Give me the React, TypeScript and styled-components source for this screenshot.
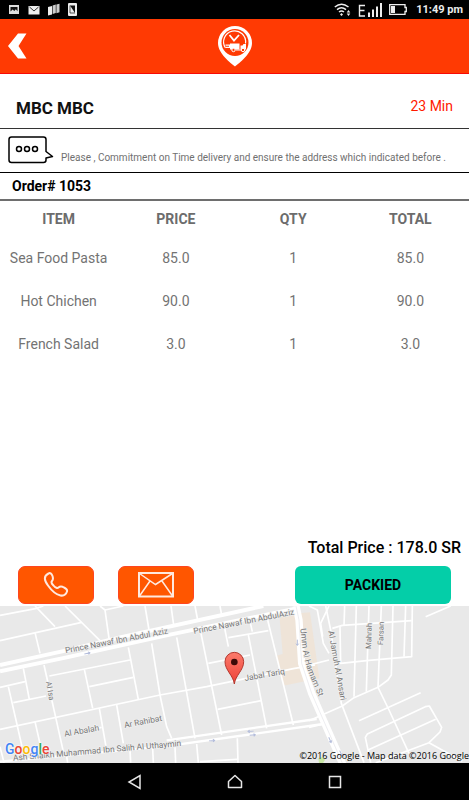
import React from "react";
import styled, { createGlobalStyle } from "styled-components";

const GlobalStyle = createGlobalStyle`
  * { box-sizing: border-box; }
  body {
    margin: 0;
    background: #fff;
    font-family: Roboto, "Open Sans", sans-serif;
  }
`;

const Screen = styled.div`
  display: flex;
  flex-direction: column;
  min-height: 100vh;
  background: #fff;
`;

const StatusBar = styled.div`
  display: flex;
  align-items: center;
  justify-content: space-between;
  height: 19px;
  padding: 0 6px 0 8px;
  background: #000;
  color: #ececec;
`;

const StatusGroup = styled.div<{ $gap: number }>`
  display: flex;
  align-items: center;
  gap: ${(p) => p.$gap}px;
`;

const Clock = styled.time`
  margin-left: 2px;
  font-size: 11px;
  line-height: 16px;
  font-weight: 700;
`;

const AppBar = styled.header`
  display: grid;
  grid-template-columns: 1fr auto 1fr;
  align-items: center;
  height: 55px;
  padding: 0 8px;
  background: #ff3a03;
  border-bottom: 1px solid #f80a06;
`;

const BackButton = styled.button`
  display: flex;
  justify-self: start;
  padding: 0;
  border: 0;
  background: none;
  cursor: pointer;
`;

const Main = styled.main`
  display: flex;
  flex: 1;
  flex-direction: column;
`;

const CustomerRow = styled.section`
  display: flex;
  align-items: center;
  justify-content: space-between;
  height: 55px;
  padding: 14px 16px 0;
  border-bottom: 1px solid #333;
`;

const CustomerName = styled.h1`
  margin: 0;
  font-size: 17px;
  line-height: 24px;
  font-weight: 700;
  color: #111;
`;

const Eta = styled.span`
  padding-bottom: 4px;
  font-size: 14px;
  line-height: 20px;
  color: #ff1a00;
`;

const NoteRow = styled.section`
  display: flex;
  align-items: flex-start;
  gap: 7px;
  height: 44px;
  padding: 7px 8px 0;
  border-bottom: 1px solid #000;

  svg {
    flex: none;
  }
`;

const NoteText = styled.p`
  margin: 14px 0 0;
  font-size: 10px;
  line-height: 16px;
  color: #707070;
`;

const OrderTitle = styled.h2`
  height: 28px;
  margin: 0;
  padding: 0 12px;
  border-bottom: 2px solid #6e6e6e;
  font-size: 14px;
  line-height: 27px;
  font-weight: 700;
  color: #000;
`;

const ItemTable = styled.table`
  width: 100%;
  table-layout: fixed;
  border-collapse: collapse;
  color: #737373;
  font-size: 14px;
  text-align: center;

  th {
    height: 36px;
    padding: 0;
    font-weight: 700;
    color: #6c6c6c;
  }
  td {
    height: 43px;
    padding: 0 0 1px;
  }
`;

const Total = styled.p`
  margin: auto 8px 8px;
  font-size: 16px;
  line-height: 20px;
  font-weight: 500;
  color: #000;
  text-align: right;
`;

const Actions = styled.div`
  display: flex;
  gap: 24px;
  padding: 0 18px 2px;
`;

const ContactButton = styled.button`
  display: flex;
  align-items: center;
  justify-content: center;
  width: 76px;
  height: 38px;
  padding: 0;
  border: 1px solid #ff4520;
  border-radius: 7px;
  background: #ff5600;
  cursor: pointer;
`;

const PackedButton = styled.button`
  width: 156px;
  height: 38px;
  margin-left: auto;
  padding: 0;
  border: 0;
  border-radius: 6px;
  background: #04cea8;
  color: #000;
  font-family: inherit;
  font-size: 14px;
  font-weight: 700;
  cursor: pointer;
`;

const MapPanel = styled.section`
  position: relative;
  height: 157px;
  overflow: hidden;
  background: #e9e9e9;
`;

const MapDrawing = styled.svg`
  display: block;
  width: 100%;
  height: 100%;
`;

const MapBrand = styled.span`
  position: absolute;
  left: 5px;
  bottom: 4px;
  font-size: 14px;
  line-height: 20px;
  font-weight: 500;
  text-shadow: 0 0 2px #fff, 0 0 2px #fff;
`;

const BrandLetter = styled.span<{ $color: string }>`
  color: ${(p) => p.$color};
`;

const Attribution = styled.span`
  position: absolute;
  right: 0;
  bottom: 0;
  font-family: "Open Sans", sans-serif;
  font-size: 9px;
  line-height: 14px;
  color: #000;
  white-space: nowrap;
`;

const NavBar = styled.nav`
  display: flex;
  align-items: center;
  justify-content: center;
  gap: 80px;
  height: 37px;
  background: #000;
`;

const NavButton = styled.button`
  display: flex;
  width: 20px;
  height: 20px;
  padding: 0;
  border: 0;
  background: none;
  cursor: pointer;
`;

const items = [
  { name: "Sea Food Pasta", price: "85.0", qty: 1, total: "85.0" },
  { name: "Hot Chichen", price: "90.0", qty: 1, total: "90.0" },
  { name: "French Salad", price: "3.0", qty: 1, total: "3.0" },
];

const brand: [string, string][] = [
  ["G", "#4285f4"],
  ["o", "#ea4335"],
  ["o", "#fbbc05"],
  ["g", "#4285f4"],
  ["l", "#34a853"],
  ["e", "#ea4335"],
];

const streets = [
  // west
  "M0 46L110 25L130 18", "M105 18L165 80", "M0 122L245 67", "M195 18L300 122",
  "M300 18L315 30L327 115", "M315 30L370 18", "M435 18L447 90", "M105 98L120 160",
  "M70 205L88 298", "M0 262L75 245", "M25 260L52 378L66 440", "M40 308L138 288",
  "M132 195L190 455", "M148 228L390 180", "M253 208L278 325", "M268 260L400 232",
  "M385 142L415 298", "M455 130L480 285L500 380L515 415", "M105 365L122 440",
  "M298 325L318 440", "M350 315L370 430", "M290 385L305 382", "M0 440L12 488",
  "M200 470L203 488", "M390 450L392 488", "M458 445L460 488",
  // centre
  "M0 388L480 285L620 260L880 206L945 195", "M513 18L521 75", "M585 18L593 60",
  "M660 18L665 45", "M530 112L585 415", "M603 100L665 405", "M673 80L685 140",
  "M625 190L750 165", "M685 113L805 92", "M750 65L757 95", "M745 105L800 385",
  "M803 60L880 375", "M653 328L783 302", "M525 440L527 488", "M590 432L595 488",
  "M712 415L714 488", "M600 485L712 478",
  // east
  "M927 18L952 30L970 130L987 160", "M987 18L962 70L968 110",
  "M977 18L992 90L1024 310L1092 488", "M1034 18L1032 78", "M1069 18L1062 290",
  "M1107 18L1099 275", "M1144 18L1134 262",
  "M1179 18L1174 225L1164 240L1134 262L1062 293L1027 318L927 362",
  "M1217 18L1212 170", "M1237 18L1235 170L1107 181L1022 190L1020 80",
  "M997 85L1027 76L1235 62", "M900 202L987 180", "M1277 50L1352 18",
  "M1134 262L1167 330L1227 460", "M1077 362L1262 278",
  "M1112 488L1096 412L1102 402L1276 320L1288 318L1325 382L1320 396L1287 428L1127 488",
  "M1104 450L1307 358", "M1287 428L1387 484", "M927 382L970 372",
];

const avenues = [
  "M0 195L200 151L360 112L790 18",
  "M0 214L200 172L360 137L510 104L890 25",
];

const shaikhRoad = [
  "M0 485L360 452L510 437L760 402L970 372",
  "M500 421L950 357",
];

const arrows: [number, number, number][] = [
  [262, 160, -11], [636, 422, -4], [752, 394, 176], [758, 405, -4],
  [892, 128, 90], [990, 420, 65], [1023, 460, 65],
];

function CityMap() {
  return (
    <MapDrawing viewBox="0 18 1407 471" preserveAspectRatio="xMidYMid slice" role="img" aria-label="Delivery location map">
      <rect x="-2000" y="-2000" width="6000" height="5000" fill="#e9e9e9" />
      <path d="M838 45L930 37L958 235L850 257L828 167L848 162Z" fill="#efe4d8" />
      <path d="M955 475l14-5l6 10l-6 9h-12z" fill="#c9e6a6" />
      <g fill="none" stroke="#fff" strokeLinejoin="round">
        {streets.map((d) => <path key={d} d={d} strokeWidth="5" />)}
        {shaikhRoad.map((d) => <path key={d} d={d} strokeWidth="7" />)}
        {avenues.map((d) => <path key={d} d={d} strokeWidth="12" />)}
        <path d="M888 18L897 60L905 190L935 280L970 360L1030 496" strokeWidth="22" />
        <path d="M888 18L897 60L905 190L935 280L970 360L1030 496" strokeWidth="2" stroke="#e4e4e8" />
      </g>
      <g stroke="#b4bddb" strokeWidth="3" fill="none">
        {arrows.map(([x, y, r]) => (
          <path key={`${x}-${y}`} d="M-9 0H8M3 -4L8 0L3 4" transform={`translate(${x} ${y}) rotate(${r})`} />
        ))}
      </g>
      <defs>
        <path id="umm" d="M901 86L908 145Q914 195 935 240L975 335" />
      </defs>
      <g fill="#777" stroke="#f1f1f1" strokeWidth="4" paintOrder="stroke" fontFamily="Roboto, sans-serif" fontSize="25">
        <text transform="translate(197 160) rotate(-11)">Prince Nawaf Ibn Abdul Aziz</text>
        <text transform="translate(582 102) rotate(-11)">Prince Nawaf Ibn AbdulAziz</text>
        <text transform="translate(40 482) rotate(-5)">Ash Shaikh Muhammad Ibn Salih Al Uthaymin</text>
        <text transform="translate(735 243) rotate(-10)">Jabal Tariq</text>
        <text transform="translate(194 410) rotate(-10)">Al Abalah</text>
        <text transform="translate(374 384) rotate(-11)">Ar Rahibat</text>
        <text fontSize="23" transform="translate(138 246) rotate(80)">Al Isa</text>
        <text><textPath href="#umm">Umm Al Hamam St</textPath></text>
        <text transform="translate(985 94) rotate(80)">Al Jamuh Al Ansari</text>
        <text fontSize="23" transform="translate(1113 147) rotate(-88)">Mahrah</text>
        <text fontSize="23" transform="translate(1149 135) rotate(-88)">Farsan</text>
      </g>
      <defs>
        <linearGradient id="pin" x1="0" y1="0" x2="0" y2="1">
          <stop offset="0" stopColor="#fb7b6c" />
          <stop offset="1" stopColor="#ee4036" />
        </linearGradient>
      </defs>
      <path d="M703 252C700 226 675 211 675 185A28 28 0 0 1 731 185C731 211 706 226 703 252Z" fill="url(#pin)" stroke="#b3372e" strokeWidth="3" />
      <circle cx="703" cy="186" r="10" fill="#3c0a08" />
    </MapDrawing>
  );
}

function NotificationIcons() {
  return (
    <StatusGroup $gap={8}>
      <svg width="12" height="12" viewBox="0 0 12 12" aria-hidden="true">
        <path d="M1 1h10v9H1z" fill="#ddd" />
        <path d="M2.5 3h7v4.300L7.800 5.300 6.300 7 4.600 5.500 2.500 7.500z" fill="#111" />
      </svg>
      <svg width="12" height="12" viewBox="0 0 12 12" aria-hidden="true">
        <path d="M.5 2h11v8.500H.5z" fill="#eee" />
        <path d="M1.500 3L6 7l4.500-4" fill="none" stroke="#333" strokeWidth="1" />
      </svg>
      <svg width="12" height="13" viewBox="0 0 12 13" aria-hidden="true">
        <path d="M0 4l4-1v8.500l-4 1z" fill="#eee" />
        <path d="M4.600 2.500l3.200-.900v8.500l-3.200 1zM8.400 1.500L11.500.800v8.400l-3.100 1z" fill="#ccc" />
      </svg>
      <svg width="10" height="13" viewBox="0 0 10 13" aria-hidden="true">
        <rect x="0" y="0" width="9" height="13" rx="1" fill="#eee" />
        <path d="M2 2.500h5v7.500z" fill="#111" />
        <path d="M2 2.500v7.500h5" fill="none" stroke="#111" strokeWidth=".7" />
      </svg>
    </StatusGroup>
  );
}

function SystemIcons() {
  return (
    <StatusGroup $gap={7}>
      <svg width="17" height="15" viewBox="0 0 17 15" fill="none" stroke="#eee" strokeWidth="1.500" aria-hidden="true">
        <path d="M.8 5Q7.500-.6 14.500 5M3 7.600Q7.500 3.800 12 7.600M5 10Q7.500 8 10 10" />
        <path d="M7.500 11l1.500 1.500-1.500 1.500L6 12.500zM14.500 8l1.800 2.500h-3.600zM14.500 14l1.800-2.500h-3.600z" fill="#eee" stroke="none" />
      </svg>
      <svg width="24" height="14" viewBox="0 0 24 14" fill="none" stroke="#eee" aria-hidden="true">
        <path d="M7 2.500H1.500V13H7M1.500 7.500H6.500" strokeWidth="1.400" />
        <path d="M11 9.500V14M15 6.500V14M19 3.500V14M23 0V14" strokeWidth="2" />
      </svg>
      <svg width="18" height="11" viewBox="0 0 18 11" aria-hidden="true">
        <path d="M.7.700h15.300v2.800h1.300v4H16v2.800H.700z" fill="none" stroke="#eee" strokeWidth="1.300" />
        <path d="M2 2h4v7H2z" fill="#eee" />
      </svg>
      <Clock>11:49 pm</Clock>
    </StatusGroup>
  );
}

function DeliveryLogo() {
  return (
    <svg width="36" height="42" viewBox="0 0 36 42" role="img" aria-label="Delivery">
      <path d="M18 41.500C14 38 1 29 1 18A17 17 0 0 1 35 18C35 29 22 38 18 41.500Z" fill="#fff" />
      <circle cx="18" cy="17.500" r="13.500" fill="#ff3a03" />
      <path d="M8.500 23A11 11 0 1 1 28.500 18.500" fill="none" stroke="#fff" strokeWidth="1.200" />
      <path d="M12.500 10L17 15.500L22 10" fill="none" stroke="#fff" strokeWidth="1.800" />
      <path d="M13 18.500h9.500v6H13v-1.500H9v-1.200h3v-1H8.500v-1.200H13z" fill="#fff" />
      <path d="M23.500 20.500h2l1-1.500h2.500v5.500h-5.500z" fill="#fff" />
      <circle cx="16.500" cy="25" r="1.700" fill="#ff3a03" stroke="#fff" />
      <circle cx="26" cy="25" r="1.700" fill="#ff3a03" stroke="#fff" />
      <path d="M19 25h5" stroke="#fff" />
    </svg>
  );
}

export default function App() {
  return (
    <>
      <GlobalStyle />
      <Screen>
        <StatusBar>
          <NotificationIcons />
          <SystemIcons />
        </StatusBar>
        <AppBar>
          <BackButton aria-label="Back">
            <svg width="19" height="26" viewBox="0 0 19 26">
              <path d="M10 .5h8.500L10.500 13l8 12.500H10L0 13z" fill="#fff" />
            </svg>
          </BackButton>
          <DeliveryLogo />
        </AppBar>
        <Main>
          <CustomerRow>
            <CustomerName>MBC MBC</CustomerName>
            <Eta>23 Min</Eta>
          </CustomerRow>
          <NoteRow>
            <svg width="46" height="28" viewBox="0 0 46 28" fill="none" stroke="#000" strokeWidth="1.500" aria-hidden="true">
              <path d="M3.500 1H35.500Q38 1 38 3.500V15.500L44.500 20.500L38 22V24Q38 26.500 35.500 26.500H3.500Q1 26.500 1 24V3.500Q1 1 3.500 1Z" strokeLinejoin="round" />
              <circle cx="11" cy="13" r="2.500" />
              <circle cx="19" cy="13" r="2.500" />
              <circle cx="27" cy="13" r="2.500" />
            </svg>
            <NoteText>Please , Commitment on Time delivery and ensure the address which indicated before .</NoteText>
          </NoteRow>
          <OrderTitle>Order# 1053</OrderTitle>
          <ItemTable>
            <thead>
              <tr>
                <th scope="col">ITEM</th>
                <th scope="col">PRICE</th>
                <th scope="col">QTY</th>
                <th scope="col">TOTAL</th>
              </tr>
            </thead>
            <tbody>
              {items.map((item) => (
                <tr key={item.name}>
                  <td>{item.name}</td>
                  <td>{item.price}</td>
                  <td>{item.qty}</td>
                  <td>{item.total}</td>
                </tr>
              ))}
            </tbody>
          </ItemTable>
          <Total>Total Price : 178.0 SR</Total>
          <Actions>
            <ContactButton aria-label="Call customer">
              <svg width="26" height="26" viewBox="0 0 26 26" fill="none" stroke="#ffe9df" strokeWidth="2" strokeLinejoin="round">
                <path d="M5.500 1.500C7 .5 8.500 1.500 9.500 4C10.500 7 10 8 9 9C8 10 9 12 10.500 13.500C12.500 16 14.500 16.500 15.500 15.500C17 14.200 18.500 14 21 15.500C24 17 24.500 18 24 19.500C23 22.500 20.500 24 17.500 23.500C13 22.500 8.500 18.500 5 13.500C1 8 .5 4 5.500 1.500Z" />
              </svg>
            </ContactButton>
            <ContactButton aria-label="Message customer">
              <svg width="36" height="26" viewBox="0 0 36 26" fill="none" stroke="#ffe9df">
                <path d="M1 1H35V24.500H1Z" strokeWidth="2" />
                <path d="M1.500 1.500L17.500 12.500L34.500 1.500M1.500 24L12 9M34.500 24L24 9" strokeWidth="1.500" />
              </svg>
            </ContactButton>
            <PackedButton>PACKIED</PackedButton>
          </Actions>
        </Main>
        <MapPanel>
          <CityMap />
          <MapBrand>
            {brand.map(([letter, color], i) => (
              <BrandLetter key={i} $color={color}>{letter}</BrandLetter>
            ))}
          </MapBrand>
          <Attribution>©2016 Google - Map data ©2016 Google</Attribution>
        </MapPanel>
        <NavBar>
          <NavButton aria-label="Back">
            <svg width="20" height="20" viewBox="0 0 20 20" fill="none" stroke="#e6e6e6" strokeWidth="1.500">
              <path d="M15 3.500V16.500L4 10Z" />
            </svg>
          </NavButton>
          <NavButton aria-label="Home">
            <svg width="20" height="20" viewBox="0 0 20 20" fill="none" stroke="#e6e6e6" strokeWidth="1.500" strokeLinejoin="round">
              <path d="M10 3.500L16.500 9.500V15.500H3.500V9.500Z" />
            </svg>
          </NavButton>
          <NavButton aria-label="Recent apps">
            <svg width="20" height="20" viewBox="0 0 20 20" fill="none" stroke="#e6e6e6" strokeWidth="1.500">
              <path d="M4.500 4.500H15.500V15.500H4.500Z" />
            </svg>
          </NavButton>
        </NavBar>
      </Screen>
    </>
  );
}
